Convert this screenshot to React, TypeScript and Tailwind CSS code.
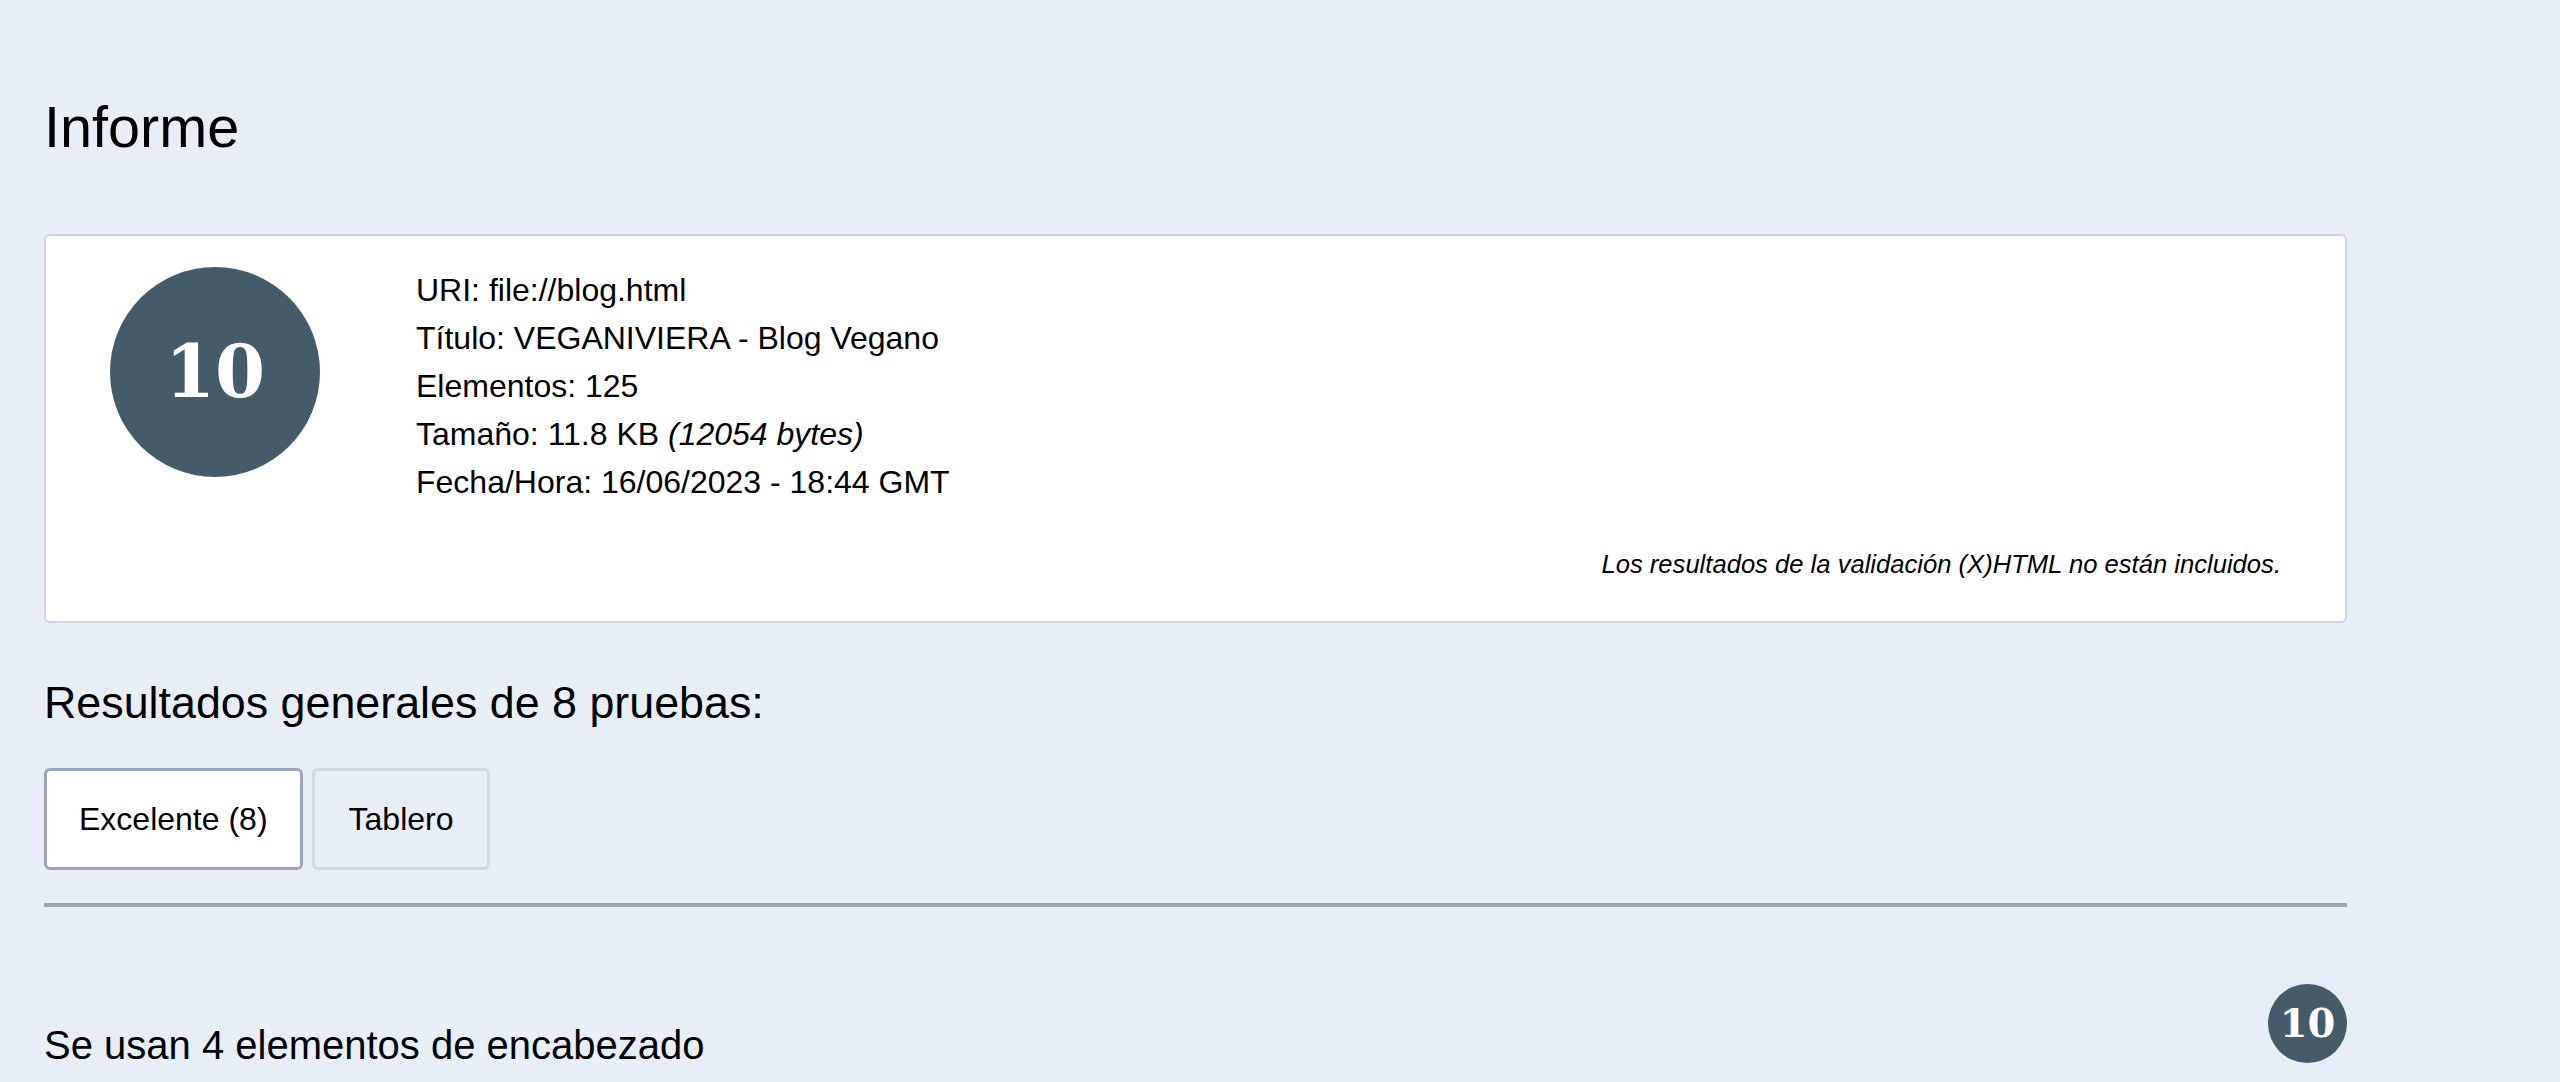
export default function App() {
  return (
    <div className="min-h-screen bg-[#e8eef6] text-black font-['Liberation_Sans',Arial,sans-serif]">
      <div className="ml-[44px] w-[2303px] pt-[86px]">
        <h1 className="-mt-[2px] mb-[2px] text-[57.6px] leading-[1.5]">Informe</h1>

        {/* Summary card */}
        <section className="mt-[64px] rounded-[6px] border-2 border-[#cdd5e0] bg-white px-[64px] pt-[31px] pb-[37px]">
          <div className="flex items-start gap-[96px]">
            <Score size="big" />
            <div className="text-[32px] leading-[1.5] -mt-[1px]">
              <p>URI: file://blog.html</p>
              <p>Título: VEGANIVIERA - Blog Vegano</p>
              <p>Elementos: 125</p>
              <p>
                Tamaño: 11.8 KB <em>(12054 bytes)</em>
              </p>
              <p>Fecha/Hora: 16/06/2023 - 18:44 GMT</p>
            </div>
          </div>
          <p className="mt-[39px] text-right text-[25.6px] leading-[1.5] italic">
            Los resultados de la validación (X)HTML no están incluidos.
          </p>
        </section>

        <h2 className="mt-[46px] text-[44.8px] leading-[1.5]">Resultados generales de 8 pruebas:</h2>

        {/* Tabs */}
        <div className="mt-[32px] flex gap-[9px] border-b-4 border-[#9ca6b9] pb-[33px]">
          <button className="rounded-[6px] border-[3px] border-[#9aa5b9] bg-white px-[32px] py-[24px] text-[32px] leading-[1.5]">
            Excelente (8)
          </button>
          <button className="rounded-[6px] border-[3px] border-[#d2d9e3] bg-transparent px-[34px] py-[24px] text-[32px] leading-[1.5]">
            Tablero
          </button>
        </div>

        <div className="mt-[77px] flex items-end justify-between">
          <h3 className="mb-[-12px] text-[40px] leading-[1.5]">Se usan 4 elementos de encabezado</h3>
          <Score size="small" />
        </div>
      </div>
    </div>
  );
}

function Score({ size }: { size: "big" | "small" }) {
  if (size === "big") {
    return (
      <div className="flex h-[210px] w-[210px] shrink-0 items-center justify-center rounded-full bg-[#445b6a] font-['DejaVu_Serif',serif] text-[72px] font-bold text-white">
        10
      </div>
    );
  }
  return (
    <div className="flex h-[79px] w-[79px] shrink-0 items-center justify-center rounded-full bg-[#445b6a] font-['DejaVu_Serif',serif] text-[40px] font-bold text-white">
      10
    </div>
  );
}
